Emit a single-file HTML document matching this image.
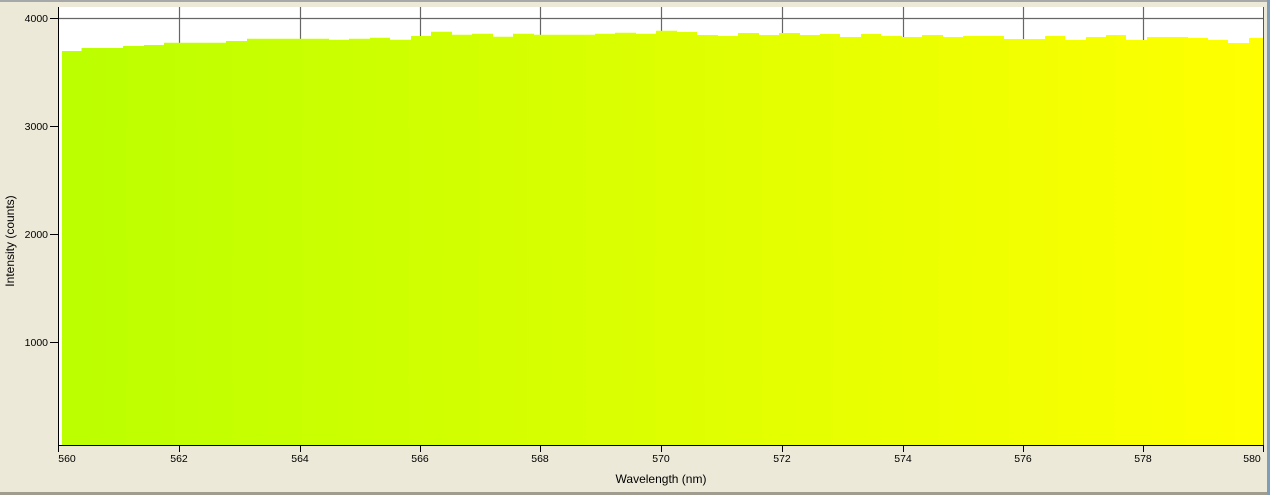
<!DOCTYPE html>
<html><head><meta charset="utf-8"><style>
html,body{margin:0;padding:0;background:#ece9d8;}
svg{display:block;font-family:"Liberation Sans",Arial,sans-serif;}
</style></head><body>
<svg width="1270" height="495" viewBox="0 0 1270 495" xmlns="http://www.w3.org/2000/svg">
<defs><linearGradient id="g" x1="62" x2="1263" y1="0" y2="0" gradientUnits="userSpaceOnUse">
<stop offset="0" stop-color="#bbff00"/><stop offset="0.5" stop-color="#ddff00"/><stop offset="1" stop-color="#ffff00"/></linearGradient></defs>
<rect x="0" y="0" width="1270" height="495" fill="#ece9d8"/>
<rect x="0" y="0" width="1268" height="2" fill="#a7a9a9"/>
<rect x="0" y="492" width="1268" height="3" fill="#a09d90"/>
<rect x="1267" y="0" width="3" height="495" fill="#7f9db9"/>
<rect x="58" y="7" width="1206" height="439" fill="#fff"/>
<g stroke="#666" stroke-width="1.2">
<line x1="58" y1="18.5" x2="1263" y2="18.5"/>
<line x1="179.5" y1="7" x2="179.5" y2="446"/><line x1="300.5" y1="7" x2="300.5" y2="446"/>
<line x1="420.5" y1="7" x2="420.5" y2="446"/><line x1="540.5" y1="7" x2="540.5" y2="446"/>
<line x1="661.5" y1="7" x2="661.5" y2="446"/><line x1="782.5" y1="7" x2="782.5" y2="446"/>
<line x1="903.5" y1="7" x2="903.5" y2="446"/><line x1="1023.5" y1="7" x2="1023.5" y2="446"/>
<line x1="1143.5" y1="7" x2="1143.5" y2="446"/>
</g>
<line x1="1263.5" y1="7" x2="1263.5" y2="446" stroke="#555"/>
<path fill="url(#g)" d="M62 445 V51 H81.5 V48 H123 V46 H144 V45 H164 V42.7 H226 V41 H247 V38.7 H329 V39.7 H349 V38.7 H370 V37.7 H390 V39.7 H411 V36 H431 V31.7 H452 V34.7 H472 V33.7 H493 V36.7 H513 V33.7 H534 V34.7 H595 V33.7 H615 V32.7 H636 V33.7 H656 V30.7 H677 V32 H697 V35 H718 V36 H738 V33 H759 V35 H779 V33 H800 V35 H820 V34 H840 V37 H861 V34 H881 V36 H902 V37 H922 V35 H943 V37 H963 V36 H1004 V39 H1045 V36 H1065 V40 H1086 V37 H1106 V35 H1126 V40 H1147 V37 H1188 V38 H1208 V40 H1228 V43 H1249 V38 H1263 V445 Z"/>
<g stroke="#000" stroke-width="1">
<line x1="58.5" y1="7" x2="58.5" y2="446"/>
<line x1="58" y1="445.5" x2="1264" y2="445.5"/>
<line x1="50" y1="18.5" x2="58" y2="18.5"/><line x1="50" y1="126.5" x2="58" y2="126.5"/>
<line x1="50" y1="234.5" x2="58" y2="234.5"/><line x1="50" y1="342.5" x2="58" y2="342.5"/>
<line x1="58.5" y1="446" x2="58.5" y2="452"/><line x1="179.5" y1="446" x2="179.5" y2="452"/>
<line x1="300.5" y1="446" x2="300.5" y2="452"/><line x1="420.5" y1="446" x2="420.5" y2="452"/>
<line x1="540.5" y1="446" x2="540.5" y2="452"/><line x1="661.5" y1="446" x2="661.5" y2="452"/>
<line x1="782.5" y1="446" x2="782.5" y2="452"/><line x1="903.5" y1="446" x2="903.5" y2="452"/>
<line x1="1023.5" y1="446" x2="1023.5" y2="452"/><line x1="1143.5" y1="446" x2="1143.5" y2="452"/>
<line x1="1263.5" y1="446" x2="1263.5" y2="452"/>
</g>
<g font-size="10.5" fill="#000" text-anchor="end">
<text x="48" y="22">4000</text><text x="48" y="130">3000</text><text x="48" y="238">2000</text><text x="48" y="346">1000</text>
</g>
<g font-size="10.5" fill="#000" text-anchor="middle">
<text x="67" y="462">560</text><text x="179" y="462">562</text><text x="300" y="462">564</text><text x="420" y="462">566</text>
<text x="540" y="462">568</text><text x="661" y="462">570</text><text x="782" y="462">572</text><text x="903" y="462">574</text>
<text x="1023" y="462">576</text><text x="1143" y="462">578</text><text x="1252" y="462">580</text>
</g>
<text x="661" y="483" font-size="12" text-anchor="middle" fill="#000">Wavelength (nm)</text>
<text transform="translate(14,241) rotate(-90)" font-size="12" text-anchor="middle" fill="#000">Intensity (counts)</text>
</svg>
</body></html>
